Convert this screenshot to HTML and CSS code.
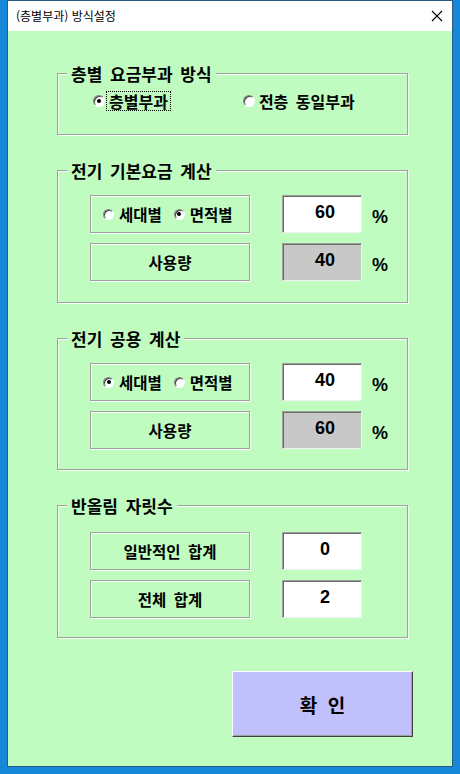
FILE: index.html
```html
<!DOCTYPE html>
<html lang="ko">
<head>
<meta charset="utf-8">
<title>(층별부과) 방식설정</title>
<link rel="stylesheet" href="styles.css">
</head>
<body>
<div class="window">
  <div class="titlebar">
    <span class="title">(층별부과) 방식설정</span>
    <svg class="close" width="12" height="12" viewBox="0 0 12 12"><path d="M1 1L11 11M11 1L1 11" stroke="#000" stroke-width="1.1" fill="none"/></svg>
  </div>
  <div class="client">
    <div class="group g1">
      <span class="legend">층별 요금부과 방식</span>
      <div class="opts">
        <div class="opt"><span class="radio on"></span><span class="olabel focus">층별부과</span></div>
        <div class="opt second"><span class="radio"></span><span class="olabel">전층 동일부과</span></div>
      </div>
    </div>

    <div class="group g2">
      <span class="legend">전기 기본요금 계산</span>
      <div class="row">
        <div class="box radios">
          <span class="radio sm"></span><span class="rl">세대별</span>
          <span class="radio sm on gapl"></span><span class="rl">면적별</span>
        </div>
        <div class="field">60</div>
        <span class="pct">%</span>
      </div>
      <div class="row">
        <div class="box">사용량</div>
        <div class="field gray">40</div>
        <span class="pct">%</span>
      </div>
    </div>

    <div class="group g3">
      <span class="legend">전기 공용 계산</span>
      <div class="row">
        <div class="box radios">
          <span class="radio sm on"></span><span class="rl">세대별</span>
          <span class="radio sm gapl"></span><span class="rl">면적별</span>
        </div>
        <div class="field">40</div>
        <span class="pct">%</span>
      </div>
      <div class="row">
        <div class="box">사용량</div>
        <div class="field gray">60</div>
        <span class="pct">%</span>
      </div>
    </div>

    <div class="group g4">
      <span class="legend">반올림 자릿수</span>
      <div class="row">
        <div class="box">일반적인 합계</div>
        <div class="field">0</div>
      </div>
      <div class="row">
        <div class="box">전체 합계</div>
        <div class="field">2</div>
      </div>
    </div>

    <button class="ok">확&nbsp;&nbsp;인</button>
  </div>
</div>
</body>
</html>
```
FILE: styles.css
```css
html, body {
  margin: 0;
  padding: 0;
}
body {
  width: 460px;
  height: 774px;
  overflow: hidden;
  background: #1787d8;
  font-family: "Noto Sans CJK KR", "Noto Sans", sans-serif;
  color: #000;
}
.window {
  margin-left: 7px;
  width: 446px;
  border: 1px solid #2a5a80;
  box-sizing: border-box;
  display: flex;
  flex-direction: column;
}
.titlebar {
  height: 30px;
  background: #fff;
  display: flex;
  align-items: center;
  justify-content: space-between;
  padding: 0 9px 0 8px;
}
.title {
  font-size: 12px;
  line-height: 14px;
}
.close {
  display: block;
}
.client {
  height: 735px;
  box-sizing: border-box;
  background: #c0fcc0;
  padding: 42px 0 0 49px;
  display: flex;
  flex-direction: column;
  align-items: flex-start;
}
.group {
  position: relative;
  width: 351px;
  box-sizing: border-box;
  border: 1px solid #a0a0a0;
  box-shadow: inset 1px 1px 0 #f4fff4, 1px 1px 0 #f4fff4;
  margin-bottom: 35px;
  display: flex;
  flex-direction: column;
  gap: 10px;
  padding-left: 32px;
}
.g1 { height: 62px; padding: 17px 0 0 35px; }
.g2 { height: 133px; padding-top: 24px; }
.g3 { height: 132px; padding-top: 24px; }
.g4 { height: 133px; padding-top: 26px; margin-bottom: 33px; }

.legend {
  position: absolute;
  top: -11px;
  left: 9px;
  padding: 0 4px;
  background: #c0fcc0;
  font-size: 17px;
  font-weight: 700;
  line-height: 22px;
  word-spacing: 3px;
  white-space: nowrap;
}
.opts {
  display: flex;
  align-items: center;
  height: 20px;
}
.opt {
  display: flex;
  align-items: center;
}
.opt.second { margin-left: 73px; }
.olabel {
  font-size: 16px;
  font-weight: 700;
  line-height: 18px;
  padding: 0 2px;
  margin-left: 2px;
  word-spacing: 3px;
}
.focus {
  outline: 1px dotted #000;
  outline-offset: 0;
}
.radio {
  position: relative;
  width: 12px;
  height: 12px;
  box-sizing: border-box;
  border-radius: 50%;
  background: #fff;
  border: 1px solid;
  border-color: #808080 #fff #fff #808080;
  box-shadow: inset 1px 1px 0 #404040;
  flex: none;
}
.radio.on::after {
  content: "";
  position: absolute;
  left: 3px;
  top: 3px;
  width: 4px;
  height: 4px;
  border-radius: 50%;
  background: #000;
}
.radio.sm { width: 11px; height: 11px; }
.radio.sm.on::after { left: 2.5px; top: 2.5px; }
.row {
  display: flex;
  align-items: center;
  height: 38px;
}
.box {
  width: 160px;
  height: 38px;
  box-sizing: border-box;
  border: 1px solid #a0a0a0;
  box-shadow: inset 1px 1px 0 #f4fff4, 1px 1px 0 #f4fff4;
  display: flex;
  align-items: center;
  justify-content: center;
  font-size: 15.5px;
  font-weight: 700;
  word-spacing: 3px;
}
.box.radios {
  justify-content: flex-start;
  padding-left: 12px;
}
.rl { margin-left: 5px; }
.gapl { margin-left: 12px; }
.field {
  margin-left: 32px;
  width: 80px;
  height: 38px;
  box-sizing: border-box;
  background: #fff;
  border: 1px solid;
  border-color: #a0a0a0 #f0f0f0 #f0f0f0 #a0a0a0;
  box-shadow: inset 1px 1px 0 #696969;
  display: flex;
  align-items: center;
  justify-content: center;
  padding: 0 0 3px 6px;
  font-family: "Liberation Sans", Arial, sans-serif;
  font-size: 18px;
  font-weight: 700;
}
.field.gray { background: #c8c8c8; }
.pct {
  margin-left: 10px;
  margin-top: 6px;
  font-family: "Liberation Sans", Arial, sans-serif;
  font-size: 18px;
  font-weight: 700;
}
.ok {
  align-self: flex-end;
  margin-right: 39px;
  width: 181px;
  height: 66px;
  background: #c0c0fc;
  border: 1px solid;
  border-color: #fff #404040 #404040 #fff;
  box-shadow: inset -1px -1px 0 #a0a0a0;
  font-family: "Noto Sans CJK KR", sans-serif;
  font-size: 19px;
  font-weight: 700;
  color: #000;
  padding: 0;
}
```
